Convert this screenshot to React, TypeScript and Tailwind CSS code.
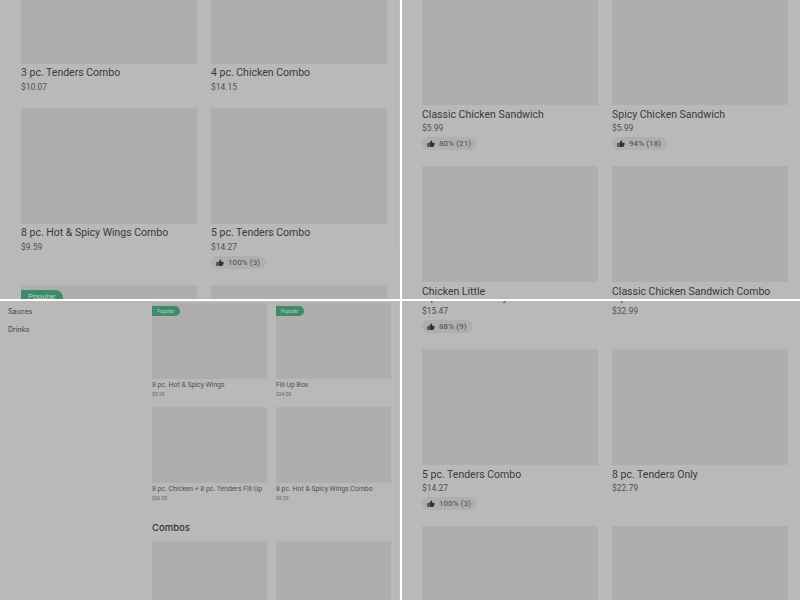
import React from "react";

type Item = { name: string; price: string; rating?: string; popular?: boolean };

function Thumb() {
  return (
    <svg viewBox="0 0 24 24" className="w-[8px] h-[8px] fill-[#333333] shrink-0">
      <path d="M1 21h4V9H1v12zm22-11c0-1.1-.9-2-2-2h-6.31l.95-4.57.03-.32c0-.41-.17-.79-.44-1.06L14.17 1 7.59 7.59C7.22 7.95 7 8.45 7 9v10c0 1.1.9 2 2 2h9c.83 0 1.54-.5 1.84-1.22l3.02-7.05c.09-.23.14-.47.14-.73v-2z" />
    </svg>
  );
}

function BigCard({ name, price, rating, popular, low }: Item & { low?: boolean }) {
  return (
    <div className="min-w-0">
      <div className="relative h-[116px] bg-[#aeaeae]">
        {popular ? (
          <span className="absolute left-0 top-[5px] h-[16px] w-[42px] rounded-r-full bg-[#3f8a68] text-[#b9cfc4] text-[8px] leading-[14px] pl-[7px]">
            Popular
          </span>
        ) : null}
      </div>
      {/* right hand panels sit one pixel lower under the picture */}
      <p className={`h-[18px] text-[10.5px] leading-[17px] text-[#3a3a3a] whitespace-nowrap ${low ? "pt-[1px]" : ""}`}>{name}</p>
      <p className="h-[10px] text-[8.5px] leading-[11px] text-[#505050]">{price}</p>
      {rating ? (
        <div className="mt-[4px] flex items-center gap-[4px] h-[13px] w-fit pl-[5px] pr-[6px] rounded-full bg-[#afafaf]">
          <Thumb />
          <span className="text-[8px] tracking-[0.1px] text-[#4a4a4a]">{rating}</span>
        </div>
      ) : null}
    </div>
  );
}

function SmallCard({ name, price, popular }: Item) {
  return (
    <div className="min-w-0">
      <div className="relative h-[76px] bg-[#aeaeae]">
        {popular ? (
          <span className="absolute left-0 top-[3px] h-[10px] w-[28px] rounded-r-full bg-[#3f8a68] text-[#b9cfc4] text-[5px] leading-[10px] pl-[5px]">
            Popular
          </span>
        ) : null}
      </div>
      <p className="mt-[1px] h-[10px] text-[6.9px] leading-[10px] text-[#505050] whitespace-nowrap">{name}</p>
      <p className="h-[8px] text-[5px] leading-[8px] text-[#666666]">{price}</p>
    </div>
  );
}

const topLeft: Item[] = [
  { name: "3 pc. Tenders Combo", price: "$10.07" },
  { name: "4 pc. Chicken Combo", price: "$14.15" },
  { name: "8 pc. Hot & Spicy Wings Combo", price: "$9.59" },
  { name: "5 pc. Tenders Combo", price: "$14.27", rating: "100% (3)" },
  { name: "", price: "", popular: true },
  { name: "", price: "" },
];

const topRight: Item[] = [
  { name: "Classic Chicken Sandwich", price: "$5.99", rating: "80% (21)" },
  { name: "Spicy Chicken Sandwich", price: "$5.99", rating: "94% (18)" },
  { name: "Chicken Little", price: "" },
  { name: "Classic Chicken Sandwich Combo", price: "" },
];

const bottomRight: Item[] = [
  { name: "8 pc. Tenders Only", price: "$15.47", rating: "88% (9)" },
  { name: "8 pc. Chicken", price: "$32.99" },
  { name: "5 pc. Tenders Combo", price: "$14.27", rating: "100% (3)" },
  { name: "8 pc. Tenders Only", price: "$22.79" },
  { name: "", price: "" },
  { name: "", price: "" },
];

const sideCards: Item[] = [
  { name: "8 pc. Hot & Spicy Wings", price: "$5.99", popular: true },
  { name: "Fill Up Box", price: "$24.00", popular: true },
  { name: "8 pc. Chicken + 8 pc. Tenders Fill Up", price: "$36.00" },
  { name: "8 pc. Hot & Spicy Wings Combo", price: "$9.59" },
];

export default function App() {
  return (
    <div className="w-[800px] h-[600px] overflow-hidden bg-white grid grid-cols-[400px_398px] grid-rows-[299px_299px] gap-[2px] font-['Roboto',sans-serif]">
      <div className="overflow-hidden bg-[#b9b9b9]">
        <div className="w-[396px] h-full border-r border-[#b3b3b3] pl-[21px]">
          <div className="-mt-[52px] grid grid-cols-[176px_176px] gap-x-[14px] gap-y-4">
            {topLeft.map((item, i) => (
              <BigCard key={i} {...item} />
            ))}
          </div>
        </div>
      </div>

      <div className="overflow-hidden bg-[#b9b9b9] pl-[20px]">
        <div className="-mt-[11px] grid grid-cols-[176px_176px] gap-x-[14px] gap-y-4">
          {topRight.map((item, i) => (
            <BigCard key={i} low {...item} />
          ))}
        </div>
      </div>

      <div className="overflow-hidden bg-[#b9b9b9]">
        <div className="w-[396px] h-full border-r border-[#b3b3b3] flex">
          <div className="w-[152px] shrink-0 pl-[8px] pt-[7px] flex flex-col gap-[10px] font-['Inter',sans-serif] text-[7px] leading-[8px] font-medium text-[#555555]">
            <span>Sauces</span>
            <span>Drinks</span>
          </div>
          <div className="w-[239px] pt-[2px]">
            <div className="grid grid-cols-[115px_115px] gap-x-[9px] gap-y-[9px]">
              {sideCards.map((item, i) => (
                <SmallCard key={i} {...item} />
              ))}
            </div>
            <h2 className="mt-[19px] h-[14px] font-['Inter',sans-serif] text-[9.5px] leading-[14px] font-medium text-[#333333]">Combos</h2>
            <div className="mt-[6px] grid grid-cols-[115px_115px] gap-x-[9px]">
              <div className="h-[76px] bg-[#aeaeae]" />
              <div className="h-[76px] bg-[#aeaeae]" />
            </div>
          </div>
        </div>
      </div>

      <div className="overflow-hidden bg-[#b9b9b9] pl-[20px]">
        <div className="-mt-[129px] grid grid-cols-[176px_176px] gap-x-[14px] gap-y-4">
          {bottomRight.map((item, i) => (
            <BigCard key={i} low {...item} />
          ))}
        </div>
      </div>
    </div>
  );
}
